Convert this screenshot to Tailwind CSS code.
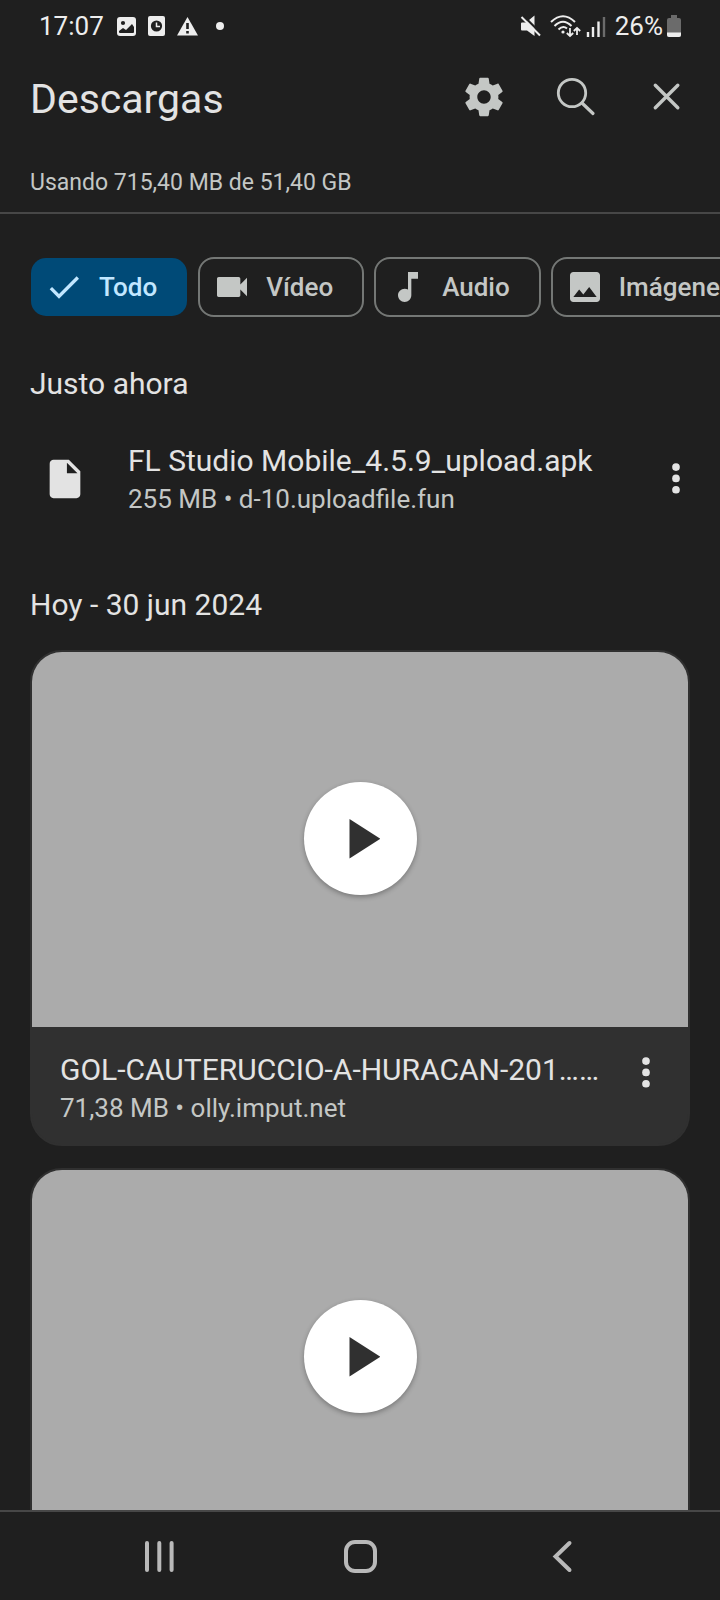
<!DOCTYPE html>
<html lang="es">
<head>
<meta charset="utf-8">
<meta name="viewport" content="width=device-width, initial-scale=1">
<title>Descargas</title>
<script src="https://cdn.jsdelivr.net/npm/@tailwindcss/browser@4"></script>
</head>
<body class="flex h-screen flex-col overflow-hidden bg-[#1f1f1f] font-[Roboto,sans-serif] text-[#e3e3e3]">

<!-- Status bar -->
<div class="flex h-[52px] shrink-0 items-center justify-between px-[39px] text-[26px] leading-8 text-[#ededed]">
  <div class="flex items-center gap-3">
    <span>17:07</span>
    <svg class="h-5 w-5" viewBox="0 0 20 20" aria-hidden="true"><rect x="1" width="19" height="19" y="1" rx="3" fill="#ededed"/><circle cx="7" cy="7" r="2.1" fill="#1f1f1f"/><path d="M3 15l4-3 3 2 6-6 2 3v5q0 1-1 1H4q-1 0-1-1z" fill="#1f1f1f"/></svg>
    <svg class="h-5 w-[17px]" viewBox="0 0 17 20" aria-hidden="true"><rect width="17" height="20" rx="2" fill="#ededed"/><circle cx="8.500" cy="10" r="5.600" fill="#1f1f1f"/><path d="M8.500 6.500V10.500H12" fill="none" stroke="#ededed" stroke-width="1.500"/></svg>
    <svg class="h-5 w-[21px]" viewBox="0 0 21 20" aria-hidden="true"><path d="M10.500 1L21 19.500H0z" fill="#ededed"/><path d="M10.500 7v6M10.500 15v2.500" stroke="#1f1f1f" stroke-width="2.600"/></svg>
    <svg class="h-5 w-5" viewBox="0 0 20 20" aria-hidden="true"><circle cx="10" cy="10" r="4" fill="#ededed"/></svg>
  </div>
  <div class="flex items-center gap-1">
    <svg class="h-6 w-[26px]" viewBox="0 0 26 24" aria-hidden="true"><path d="M1 9.500Q1 8.500 2 8.500H6L14.500 1.500V22L7 16.500H2Q1 16.500 1 15.500z" fill="#ededed"/><path d="M3 1.500L22 20.500" stroke="#1f1f1f" stroke-width="2.400"/><path d="M1.500 3L20 21.500" stroke="#ededed" stroke-width="2"/></svg>
    <svg class="h-6 w-8" viewBox="0 0 32 24" fill="none" stroke="#ededed" stroke-width="2" aria-hidden="true"><path d="M1 8Q13-3.500 25 8M4.500 12Q13 3.500 21.500 12M8.500 15.500Q13 11 17 14.500"/><circle cx="13" cy="18" r="1.600" fill="#ededed" stroke="none"/><path d="M20 14v8M16.800 19l3.200 3 3.200-3M27 21v-7M23.800 17l3.200-3 3.200 3" stroke-width="1.800"/></svg>
    <svg class="h-6 w-[25px]" viewBox="0 0 25 24" stroke="#ededed" stroke-width="2.400" aria-hidden="true"><path d="M2 18v5M7 13v10M12.500 7.500V23"/><path d="M18 3v20" stroke="#6b6b6b"/></svg>
    <span>26%</span>
    <svg class="h-[22px] w-[14px]" viewBox="0 0 14 22" aria-hidden="true"><path d="M4 0h6v3h2q2 0 2 2v15q0 2-2 2H2q-2 0-2-2V5q0-2 2-2h2z" fill="#6b6b6b"/><path d="M0 17.500h14V20q0 2-2 2H2q-2 0-2-2z" fill="#ededed"/></svg>
  </div>
</div>

<!-- Header -->
<header class="shrink-0 border-b-2 border-[#474747] px-[30px] pb-[13px]">
  <div class="flex h-[90px] items-center justify-between">
    <h1 class="pt-1 text-[41px] leading-[48px]">Descargas</h1>
    <div class="flex items-center gap-[43px] text-[#c4c7c5]">
      <button type="button" aria-label="Configuración" class="grid h-12 w-12 place-items-center">
        <svg class="h-[46px] w-[46px]" viewBox="0 0 24 24" fill="currentColor"><path d="M19.430 12.980c.04-.32.07-.64.07-.98s-.03-.66-.07-.98l2.110-1.650c.19-.15.24-.42.12-.64l-2-3.460c-.12-.22-.39-.3-.61-.22l-2.490 1c-.52-.4-1.080-.73-1.690-.98l-.38-2.650C14.460 2.180 14.250 2 14 2h-4c-.25 0-.46.18-.49.42l-.38 2.650c-.61.25-1.170.59-1.690.98l-2.490-1c-.23-.09-.49 0-.61.22l-2 3.460c-.13.22-.07.49.12.64l2.110 1.650c-.04.32-.07.65-.07.98s.03.66.07.98l-2.110 1.650c-.19.15-.24.42-.12.64l2 3.460c.12.22.39.3.61.22l2.490-1c.52.4 1.080.73 1.690.98l.38 2.650c.03.24.24.42.49.42h4c.25 0 .46-.18.49-.42l.38-2.650c.61-.25 1.170-.59 1.690-.98l2.490 1c.23.09.49 0 .61-.22l2-3.460c.12-.22.07-.49-.12-.64l-2.110-1.650zM12 15.500c-1.930 0-3.500-1.570-3.500-3.500s1.570-3.500 3.500-3.500 3.500 1.570 3.500 3.500-1.570 3.500-3.500 3.500z"/></svg>
      </button>
      <button type="button" aria-label="Buscar" class="grid h-12 w-12 place-items-center">
        <svg class="h-12 w-12" viewBox="0 0 48 48" fill="none" stroke="currentColor" stroke-width="2.800" stroke-linecap="round"><circle cx="21" cy="20" r="13.700"/><path d="M31 30L42 40.500" stroke-width="3.200"/></svg>
      </button>
      <button type="button" aria-label="Cerrar" class="grid h-12 w-12 place-items-center">
        <svg class="h-12 w-12" viewBox="0 0 48 48" fill="none" stroke="currentColor" stroke-width="3.400" stroke-linecap="round"><path d="M13.300 12.300L35.800 34.800M35.800 12.300L13.300 34.800"/></svg>
      </button>
    </div>
  </div>
  <p class="mt-[25px] text-[23px] leading-8 text-[#c4c7c5]">Usando 715,40 MB de 51,40 GB</p>
</header>

<main class="flex min-h-0 flex-1 flex-col overflow-hidden">
  <!-- Filters -->
  <div class="mt-[43px] flex shrink-0 gap-[10px] overflow-hidden pl-[30px] text-[26px] font-medium leading-8 text-[#c4c7c5]">
    <button type="button" aria-pressed="true" class="flex h-[60px] shrink-0 items-center gap-[15px] rounded-2xl border border-transparent bg-[#004a77] bg-clip-padding pl-[13px] pr-[30px] text-[#c2e7ff]">
      <svg class="h-10 w-10" viewBox="0 0 24 24" fill="currentColor" aria-hidden="true"><path d="M9 16.170L4.830 12l-1.420 1.410L9 19 21 7l-1.410-1.410z"/></svg>Todo</button>
    <button type="button" class="flex h-[60px] shrink-0 items-center gap-[14px] rounded-2xl border-2 border-[#747775] pl-3 pr-[29px]">
      <svg class="h-10 w-10" viewBox="0 0 24 24" fill="currentColor" aria-hidden="true"><path d="M17 10.500V7c0-.55-.45-1-1-1H4c-.55 0-1 .45-1 1v10c0 .55.45 1 1 1h12c.55 0 1-.45 1-1v-3.500l4 4v-11l-4 4z"/></svg>Vídeo</button>
    <button type="button" class="flex h-[60px] shrink-0 items-center gap-[14px] rounded-2xl border-2 border-[#747775] pl-3 pr-[29px]">
      <svg class="h-10 w-10" viewBox="0 0 24 24" fill="currentColor" aria-hidden="true"><path d="M12 3v10.550c-.59-.34-1.270-.55-2-.55-2.210 0-4 1.790-4 4s1.790 4 4 4 4-1.790 4-4V7h4V3h-6z"/></svg>Audio</button>
    <button type="button" class="flex h-[60px] shrink-0 items-center gap-[14px] rounded-2xl border-2 border-[#747775] pl-3 pr-[29px]">
      <svg class="h-10 w-10" viewBox="0 0 24 24" fill="currentColor" aria-hidden="true"><path d="M21 19V5c0-1.100-.9-2-2-2H5c-1.100 0-2 .9-2 2v14c0 1.100.9 2 2 2h14c1.100 0 2-.9 2-2zM8.500 13.500l2.500 3.010L14.500 12l4.500 6H5l3.500-4.500z"/></svg>Imágenes</button>
  </div>

  <h2 class="mt-[47px] shrink-0 px-[30px] text-[30px] leading-10">Justo ahora</h2>
  <div class="mt-[37px] flex shrink-0 items-center pl-[42px] pr-[21px]">
    <svg class="h-[46px] w-[46px] shrink-0" viewBox="0 0 24 24" fill="currentColor" aria-hidden="true"><path d="M6 2c-1.100 0-1.990.9-1.990 2L4 20c0 1.100.89 2 1.990 2H18c1.100 0 2-.9 2-2V8l-6-6H6zm7 7V3.500L18.500 9H13z"/></svg>
    <div class="ml-10 min-w-0 flex-1">
      <p class="truncate text-[30px] leading-10">FL Studio Mobile_4.5.9_upload.apk</p>
      <p class="truncate text-[26px] leading-9 text-[#c4c7c5]">255 MB • d-10.uploadfile.fun</p>
    </div>
    <button type="button" aria-label="Más opciones" class="shrink-0">
      <svg class="h-[46px] w-[46px]" viewBox="0 0 24 24" fill="currentColor"><circle cx="12" cy="5.800" r="2"/><circle cx="12" cy="11.700" r="2"/><circle cx="12" cy="17.600" r="2"/></svg>
    </button>
  </div>

  <h2 class="mt-[68px] shrink-0 px-[30px] text-[30px] leading-10">Hoy - 30 jun 2024</h2>
  <div class="mt-[25px] flex shrink-0 flex-col gap-[22px] px-[30px]">
    <article class="overflow-hidden rounded-[32px] border-2 border-[#303030] bg-[#303030]">
      <div class="flex h-[375px] items-center justify-center bg-[#ababab] pb-0.5">
        <button type="button" aria-label="Reproducir" class="grid h-[113px] w-[113px] place-items-center rounded-full bg-white shadow-[0_2px_5px_rgba(0,0,0,0.3)]">
          <svg class="h-10 w-10" viewBox="0 0 40 40" aria-hidden="true"><path d="M9.500 0L40.500 19.700L9.500 39.500z" fill="#303030"/></svg>
        </button>
      </div>
      <div class="flex items-start pb-[18px] pl-7 pr-[19px] pt-[23px]">
        <div class="min-w-0 flex-1">
          <p class="truncate text-[30px] leading-10">GOL-CAUTERUCCIO-A-HURACAN-201……</p>
          <p class="truncate text-[26px] leading-9 text-[#c4c7c5]">71,38 MB • olly.imput.net</p>
        </div>
        <button type="button" aria-label="Más opciones" class="shrink-0">
          <svg class="h-[46px] w-[46px]" viewBox="0 0 24 24" fill="currentColor"><circle cx="12" cy="5.800" r="2"/><circle cx="12" cy="11.700" r="2"/><circle cx="12" cy="17.600" r="2"/></svg>
        </button>
      </div>
    </article>
    <article class="overflow-hidden rounded-[32px] border-2 border-[#303030] bg-[#303030] pb-[117px]">
      <div class="flex h-[375px] items-center justify-center bg-[#ababab] pb-0.5">
        <button type="button" aria-label="Reproducir" class="grid h-[113px] w-[113px] place-items-center rounded-full bg-white shadow-[0_2px_5px_rgba(0,0,0,0.3)]">
          <svg class="h-10 w-10" viewBox="0 0 40 40" aria-hidden="true"><path d="M9.500 0L40.500 19.700L9.500 39.500z" fill="#303030"/></svg>
        </button>
      </div>
    </article>
  </div>
</main>

<!-- System navigation -->
<nav class="grid h-[90px] shrink-0 grid-cols-3 border-t-2 border-[#474747] px-[60px] text-[#b9b9b9]">
  <button type="button" aria-label="Recientes" class="grid place-items-center">
    <svg class="h-9 w-9" viewBox="0 0 36 36" fill="none" stroke="currentColor" stroke-width="4" stroke-linecap="round"><path d="M5 5v27M17.300 5v27M29.600 5v27"/></svg>
  </button>
  <button type="button" aria-label="Inicio" class="grid place-items-center">
    <svg class="h-9 w-9" viewBox="0 0 36 36" fill="none" stroke="currentColor" stroke-width="4"><rect x="4" y="4" width="29" height="29" rx="9"/></svg>
  </button>
  <button type="button" aria-label="Atrás" class="grid place-items-center">
    <svg class="h-9 w-9" viewBox="0 0 36 36" fill="none" stroke="currentColor" stroke-width="4"><path d="M27.500 5L13.500 18.500L27.500 32" stroke-linecap="round"/></svg>
  </button>
</nav>
</body>
</html>
